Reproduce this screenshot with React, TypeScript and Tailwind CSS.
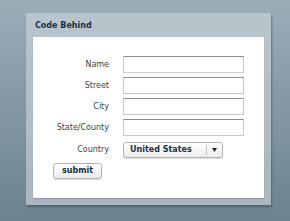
const fields = ["Name", "Street", "City", "State/County"];

function Row({ label, children }: { label: string; children: React.ReactNode }) {
  return (
    <div className="flex items-center h-[17px]">
      <div className="w-[77px] pr-px text-right text-[8px] text-[#3a3f44]">{label}</div>
      <div className="ml-[13px]">{children}</div>
    </div>
  );
}

export default function App() {
  return (
    <div
      className="w-[290px] h-[221px] pt-[13px] pl-[26px] bg-gradient-to-b from-[#9badb7] to-[#6c8290]"
      style={{ fontFamily: '"DejaVu Sans", Verdana, sans-serif' }}
    >
      <div className="w-[245px] h-[192px] rounded-t-[2px] bg-gradient-to-b from-[#b9c5cc] to-[#a9b6be] shadow-[1px_2px_2px_rgba(40,60,75,0.45)] flex flex-col">
        <div className="h-[24px] flex items-center pl-[9px] pt-px">
          <span className="text-[8px] font-bold text-[#1c3042]">Code Behind</span>
        </div>
        <div className="mx-[7px] h-[161px] bg-white shadow-[0_1px_1px_rgba(0,0,0,0.15)] pt-[19px]">
          <div className="flex flex-col gap-[4px]">
            {fields.map((f) => (
              <Row key={f} label={f}>
                <div className="w-[121px] h-[17px] border border-[#c9c9c9] border-t-[#8e8e8e]" />
              </Row>
            ))}
          </div>
          <div className="mt-[5px]">
            <Row label="Country">
              <div className="w-[100px] h-[16px] rounded-[3px] border border-[#b4b4b4] bg-gradient-to-b from-white to-[#ececec] shadow-[0_1px_1px_rgba(0,0,0,0.15)] flex items-center">
                <span className="pl-[6px] text-[8px] font-bold text-[#1c3042] flex-1">United States</span>
                <div className="w-px h-[10px] bg-[#c4c4c4]" />
                <svg width="5" height="4" viewBox="0 0 5 4" className="mx-[5px]">
                  <path d="M0 0H5L2.5 4Z" fill="#222" />
                </svg>
              </div>
            </Row>
          </div>
          <div className="mt-[5px] ml-[20px]">
            <button className="w-[49px] h-[16px] rounded-[3px] border border-[#b4b4b4] bg-gradient-to-b from-white to-[#ececec] shadow-[0_1px_1px_rgba(0,0,0,0.15)] text-[8px] font-bold text-[#1c3042] flex items-center justify-center">
              submit
            </button>
          </div>
        </div>
      </div>
    </div>
  );
}
